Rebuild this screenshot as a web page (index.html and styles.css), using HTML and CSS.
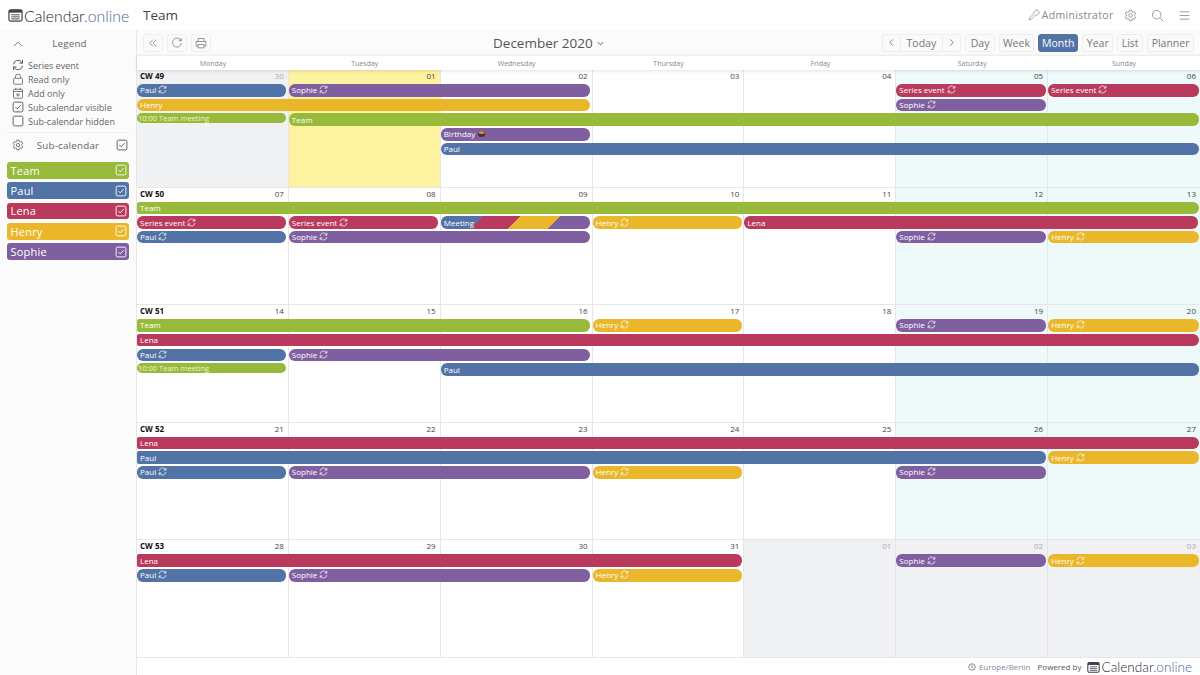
FILE: index.html
```html
<!DOCTYPE html>
<html lang="en">
<head>
    <meta charset="UTF-8">
    <meta name="viewport" content="width=device-width, initial-scale=1.0">
    <title>Team - Calendar.online</title>
    <link rel="stylesheet" href="styles.css">
</head>
<body>
    <svg class="sprite" aria-hidden="true">
        <symbol id="i-sync" viewBox="0 0 16 16">
            <path d="M2 7a6 6 0 0 1 10.5-3.2L14 5.5M14 1.5v4h-4M14 9a6 6 0 0 1-10.5 3.2L2 10.5M2 14.5v-4h4" fill="none" stroke="currentColor" stroke-width="1.3"/>
        </symbol>
        <symbol id="i-check" viewBox="0 0 16 16">
            <rect x="1.5" y="1.5" width="13" height="13" rx="2" fill="none" stroke="currentColor" stroke-width="1.2"/>
            <path d="M4.5 8l2.5 2.5 4.5-5" fill="none" stroke="currentColor" stroke-width="1.2"/>
        </symbol>
        <symbol id="i-gear" viewBox="0 0 16 16">
            <path d="M6.6 1.5h2.8l.4 2 1.3.7 1.9-.7 1.4 2.5-1.5 1.3v1.4l1.5 1.3-1.4 2.5-1.9-.7-1.3.7-.4 2H6.6l-.4-2-1.3-.7-1.9.7L1.6 10l1.5-1.3V7.3L1.6 6l1.4-2.5 1.9.7 1.3-.7z" fill="none" stroke="currentColor"/>
            <circle cx="8" cy="8" r="2.2" fill="none" stroke="currentColor"/>
        </symbol>
        <symbol id="i-cal" viewBox="0 0 16 14">
            <rect x="1" y="1.5" width="14" height="12" rx="2" fill="none" stroke="currentColor" stroke-width="1.3"/>
            <path d="M1 1.5h14v3H1z" fill="currentColor"/>
            <path d="M3.5 6.8h9M3.5 9h9M3.5 11.2h9" stroke="currentColor"/>
        </symbol>
    </svg>

    <header class="topbar">
        <div class="logo">
            <svg class="logo-icon"><use href="#i-cal"/></svg>
            <span>Calendar<em>.online</em></span>
        </div>
        <div class="page-title">Team</div>
        <div class="user-menu">
            <svg class="icon-key" viewBox="0 0 16 16"><path d="M1.5 14.5l1-3 5.5-5.5a3.5 3.5 0 1 1 2 2l-5.5 5.5z" fill="none" stroke="currentColor"/></svg>
            <span class="user-name">Administrator</span>
            <svg class="top-icon"><use href="#i-gear"/></svg>
            <svg class="top-icon" viewBox="0 0 16 16"><circle cx="7" cy="7" r="5.3" fill="none" stroke="currentColor"/><path d="M11 11l4 4" stroke="currentColor"/></svg>
            <svg class="top-icon" viewBox="0 0 16 16"><path d="M2 3.5h12M2 8h12M2 12.5h12" stroke="currentColor"/></svg>
        </div>
    </header>

    <div class="main">
        <aside class="sidebar">
            <div class="side-head">
                <svg class="side-icon" viewBox="0 0 16 16"><path d="M2.5 11L8 5.5l5.5 5.5" fill="none" stroke="currentColor"/></svg>
                <span class="side-title">Legend</span>
            </div>
            <ul class="legend">
                <li><svg><use href="#i-sync"/></svg>Series event</li>
                <li><svg viewBox="0 0 16 16"><rect x="2" y="7" width="12" height="8" rx="1.5" fill="none" stroke="currentColor"/><path d="M4.5 7V5a3.5 3.5 0 0 1 7 0v2" fill="none" stroke="currentColor"/></svg>Read only</li>
                <li><svg viewBox="0 0 16 16"><rect x="2" y="3" width="12" height="12" rx="1" fill="none" stroke="currentColor"/><path d="M2 6h12M5 1v3M11 1v3M8 8v5M5.5 10.5h5" fill="none" stroke="currentColor"/></svg>Add only</li>
                <li><svg><use href="#i-check"/></svg>Sub-calendar visible</li>
                <li><svg viewBox="0 0 16 16"><rect x="1.5" y="1.5" width="13" height="13" rx="2" fill="none" stroke="currentColor" stroke-width="1.2"/></svg>Sub-calendar hidden</li>
            </ul>
            <div class="side-head sub-head">
                <svg class="side-icon"><use href="#i-gear"/></svg>
                <span class="side-title">Sub-calendar</span>
                <svg class="side-check"><use href="#i-check"/></svg>
            </div>
            <div class="sub-item team">Team<svg><use href="#i-check"/></svg></div>
            <div class="sub-item paul">Paul<svg><use href="#i-check"/></svg></div>
            <div class="sub-item lena">Lena<svg><use href="#i-check"/></svg></div>
            <div class="sub-item henry">Henry<svg><use href="#i-check"/></svg></div>
            <div class="sub-item sophie">Sophie<svg><use href="#i-check"/></svg></div>
        </aside>

        <section class="content">
            <div class="toolbar">
                <div class="tool-left">
                    <button class="btn btn-icon"><svg viewBox="0 0 16 16"><path d="M8 3.5L3.5 8 8 12.5M12.5 3.5L8 8l4.5 4.5" fill="none" stroke="currentColor"/></svg></button>
                    <button class="btn btn-icon"><svg viewBox="0 0 16 16"><path d="M13.5 5a6 6 0 1 0 .5 3M13.8 1.5V5h-3.5" fill="none" stroke="currentColor"/></svg></button>
                    <button class="btn btn-icon"><svg viewBox="0 0 16 16"><path d="M4 6V2h8v4M4 12H1.5V6h13v6H12M4 10h8v4.5H4z" fill="none" stroke="currentColor"/></svg></button>
                </div>
                <div class="month-title">December 2020 <svg viewBox="0 0 10 10"><path d="M2 3.5L5 6.5 8 3.5" fill="none" stroke="currentColor"/></svg></div>
                <div class="tool-right">
                    <div class="btn-group">
                        <button class="btn"><svg viewBox="0 0 10 10"><path d="M6.5 1.5L3 5l3.5 3.5" fill="none" stroke="currentColor"/></svg></button>
                        <button class="btn btn-today">Today</button>
                        <button class="btn"><svg viewBox="0 0 10 10"><path d="M3.5 1.5L7 5 3.5 8.5" fill="none" stroke="currentColor"/></svg></button>
                    </div>
                    <button class="btn btn-day">Day</button>
                    <button class="btn btn-tight">Week</button>
                    <button class="btn btn-tight active">Month</button>
                    <button class="btn">Year</button>
                    <button class="btn">List</button>
                    <button class="btn">Planner</button>
                </div>
            </div>

            <div class="weekdays">
                <div>Monday</div><div>Tuesday</div><div>Wednesday</div><div>Thursday</div><div>Friday</div><div>Saturday</div><div>Sunday</div>
            </div>

            <div class="weeks">
                <div class="week">
                    <div class="day col-1 other"><b>CW 49</b><span class="num">30</span></div>
                    <div class="day col-2 today"><span class="num">01</span></div>
                    <div class="day col-3"><span class="num">02</span></div>
                    <div class="day col-4"><span class="num">03</span></div>
                    <div class="day col-5"><span class="num">04</span></div>
                    <div class="day col-6 weekend"><span class="num">05</span></div>
                    <div class="day col-7 weekend"><span class="num">06</span></div>

                    <div class="ev paul row-1 col-1">Paul<svg><use href="#i-sync"/></svg></div>
                    <div class="ev sophie row-1 col-2 span-2">Sophie<svg><use href="#i-sync"/></svg></div>
                    <div class="ev lena row-1 col-6">Series event<svg><use href="#i-sync"/></svg></div>
                    <div class="ev lena row-1 col-7">Series event<svg><use href="#i-sync"/></svg></div>
                    <div class="ev henry row-2 col-1 span-3">Henry</div>
                    <div class="ev sophie row-2 col-6">Sophie<svg><use href="#i-sync"/></svg></div>
                    <div class="ev timed team row-3 col-1">10:00 Team meeting</div>
                    <div class="ev team row-3 col-2 span-6">Team</div>
                    <div class="ev sophie row-4 col-3">Birthday<svg class="cake" viewBox="0 0 12 12"><ellipse cx="6" cy="6.5" rx="5" ry="4" fill="#4a3326"/><ellipse cx="6" cy="4.5" rx="4" ry="2" fill="#c98a5a"/></svg></div>
                    <div class="ev paul row-5 col-3 span-5">Paul</div>
                </div>

                <div class="week">
                    <div class="day col-1"><b>CW 50</b><span class="num">07</span></div>
                    <div class="day col-2"><span class="num">08</span></div>
                    <div class="day col-3"><span class="num">09</span></div>
                    <div class="day col-4"><span class="num">10</span></div>
                    <div class="day col-5"><span class="num">11</span></div>
                    <div class="day col-6 weekend"><span class="num">12</span></div>
                    <div class="day col-7 weekend"><span class="num">13</span></div>

                    <div class="ev team row-1 col-1 span-7 from-prev">Team</div>
                    <div class="ev lena row-2 col-1">Series event<svg><use href="#i-sync"/></svg></div>
                    <div class="ev lena row-2 col-2">Series event<svg><use href="#i-sync"/></svg></div>
                    <div class="ev meeting row-2 col-3">Meeting</div>
                    <div class="ev henry row-2 col-4">Henry<svg><use href="#i-sync"/></svg></div>
                    <div class="ev lena row-2 col-5 span-3">Lena</div>
                    <div class="ev paul row-3 col-1">Paul<svg><use href="#i-sync"/></svg></div>
                    <div class="ev sophie row-3 col-2 span-2">Sophie<svg><use href="#i-sync"/></svg></div>
                    <div class="ev sophie row-3 col-6">Sophie<svg><use href="#i-sync"/></svg></div>
                    <div class="ev henry row-3 col-7">Henry<svg><use href="#i-sync"/></svg></div>
                </div>

                <div class="week">
                    <div class="day col-1"><b>CW 51</b><span class="num">14</span></div>
                    <div class="day col-2"><span class="num">15</span></div>
                    <div class="day col-3"><span class="num">16</span></div>
                    <div class="day col-4"><span class="num">17</span></div>
                    <div class="day col-5"><span class="num">18</span></div>
                    <div class="day col-6 weekend"><span class="num">19</span></div>
                    <div class="day col-7 weekend"><span class="num">20</span></div>

                    <div class="ev team row-1 col-1 span-3 from-prev">Team</div>
                    <div class="ev henry row-1 col-4">Henry<svg><use href="#i-sync"/></svg></div>
                    <div class="ev sophie row-1 col-6">Sophie<svg><use href="#i-sync"/></svg></div>
                    <div class="ev henry row-1 col-7">Henry<svg><use href="#i-sync"/></svg></div>
                    <div class="ev lena row-2 col-1 span-7 from-prev">Lena</div>
                    <div class="ev paul row-3 col-1">Paul<svg><use href="#i-sync"/></svg></div>
                    <div class="ev sophie row-3 col-2 span-2">Sophie<svg><use href="#i-sync"/></svg></div>
                    <div class="ev timed team row-4 col-1">10:00 Team meeting</div>
                    <div class="ev paul row-4 col-3 span-5">Paul</div>
                </div>

                <div class="week">
                    <div class="day col-1"><b>CW 52</b><span class="num">21</span></div>
                    <div class="day col-2"><span class="num">22</span></div>
                    <div class="day col-3"><span class="num">23</span></div>
                    <div class="day col-4"><span class="num">24</span></div>
                    <div class="day col-5"><span class="num">25</span></div>
                    <div class="day col-6 weekend"><span class="num">26</span></div>
                    <div class="day col-7 weekend"><span class="num">27</span></div>

                    <div class="ev lena row-1 col-1 span-7 from-prev">Lena</div>
                    <div class="ev paul row-2 col-1 span-6 from-prev">Paul</div>
                    <div class="ev henry row-2 col-7">Henry<svg><use href="#i-sync"/></svg></div>
                    <div class="ev paul row-3 col-1">Paul<svg><use href="#i-sync"/></svg></div>
                    <div class="ev sophie row-3 col-2 span-2">Sophie<svg><use href="#i-sync"/></svg></div>
                    <div class="ev henry row-3 col-4">Henry<svg><use href="#i-sync"/></svg></div>
                    <div class="ev sophie row-3 col-6">Sophie<svg><use href="#i-sync"/></svg></div>
                </div>

                <div class="week">
                    <div class="day col-1"><b>CW 53</b><span class="num">28</span></div>
                    <div class="day col-2"><span class="num">29</span></div>
                    <div class="day col-3"><span class="num">30</span></div>
                    <div class="day col-4"><span class="num">31</span></div>
                    <div class="day col-5 other"><span class="num">01</span></div>
                    <div class="day col-6 other"><span class="num">02</span></div>
                    <div class="day col-7 other"><span class="num">03</span></div>

                    <div class="ev lena row-1 col-1 span-4 from-prev">Lena</div>
                    <div class="ev sophie row-1 col-6">Sophie<svg><use href="#i-sync"/></svg></div>
                    <div class="ev henry row-1 col-7">Henry<svg><use href="#i-sync"/></svg></div>
                    <div class="ev paul row-2 col-1">Paul<svg><use href="#i-sync"/></svg></div>
                    <div class="ev sophie row-2 col-2 span-2">Sophie<svg><use href="#i-sync"/></svg></div>
                    <div class="ev henry row-2 col-4">Henry<svg><use href="#i-sync"/></svg></div>
                </div>
            </div>

            <footer class="footer">
                <svg class="clock" viewBox="0 0 16 16"><circle cx="8" cy="8" r="6.5" fill="none" stroke="currentColor" stroke-width="1.5"/><path d="M8 4v4.5l3 1.5" fill="none" stroke="currentColor" stroke-width="1.5"/></svg>
                <span class="timezone">Europe/Berlin</span>
                <span class="powered">Powered by</span>
                <div class="logo logo-small">
                    <svg class="logo-icon"><use href="#i-cal"/></svg>
                    <span>Calendar<em>.online</em></span>
                </div>
            </footer>
        </section>
    </div>
</body>
</html>
```

FILE: styles.css
```css
* {
    box-sizing: border-box;
}

html, body {
    height: 100%;
}

body {
    margin: 0;
    display: flex;
    flex-direction: column;
    overflow: hidden;
    font-family: 'Open Sans', 'Liberation Sans', sans-serif;
    color: #666;
    background-color: #fff;
}

.sprite {
    position: absolute;
    width: 0;
    height: 0;
}

/* top bar */
.topbar {
    height: 30px;
    flex: none;
    display: flex;
    align-items: center;
    padding-left: 8px;
    background-color: #fff;
}

.logo {
    display: flex;
    align-items: center;
    width: 135px;
    flex: none;
    font-family: 'Lato', sans-serif;
    font-weight: 300;
    font-size: 15.8px;
    color: #1f252e;
}

.logo em {
    font-style: normal;
    color: #4d688f;
}

.logo-icon {
    width: 15px;
    height: 14px;
    flex: none;
    margin-right: 1px;
    color: #3d4450;
}

.page-title {
    font-size: 13.5px;
    color: #444;
}

.user-menu {
    margin-left: auto;
    display: flex;
    align-items: center;
    padding-right: 9px;
    color: #888;
}

.icon-key {
    width: 12px;
    height: 12px;
    margin-right: 2px;
}

.user-name {
    font-size: 10.5px;
    letter-spacing: 0.3px;
}

.top-icon {
    width: 13px;
    height: 13px;
    margin-left: 14px;
}

.user-name + .top-icon {
    margin-left: 10.5px;
}

.main {
    flex: 1;
    min-height: 0;
    display: flex;
}

/* sidebar */
.sidebar {
    width: 137px;
    flex: none;
    padding: 0 7px;
    border-right: 1px solid #e6e6e6;
    background-color: #fbfbfb;
}

.side-head {
    height: 27px;
    display: flex;
    align-items: center;
    padding-left: 5px;
    font-size: 9.8px;
    letter-spacing: 0.2px;
}

.side-icon {
    width: 12px;
    height: 12px;
    color: #555;
}

.side-title {
    flex: 1;
    text-align: center;
    padding-right: 14px;
}

.sub-head {
    height: 25px;
    margin-bottom: 5px;
    padding-right: 1px;
    border-top: 1px solid #eee;
}

.sub-head .side-title {
    padding-right: 4px;
}

.side-check {
    width: 12px;
    height: 12px;
    color: #555;
}

.legend {
    list-style: none;
    margin: 1px 0 4px;
    padding: 0 0 0 5px;
    font-size: 9px;
    white-space: nowrap;
    overflow: hidden;
}

.legend li {
    height: 14px;
    display: flex;
    align-items: center;
    gap: 4px;
}

.legend svg {
    width: 12px;
    height: 12px;
    color: #555;
}

.sub-item {
    height: 16.8px;
    margin-bottom: 3.5px;
    display: flex;
    align-items: center;
    justify-content: space-between;
    padding: 0 2.5px 0 3.5px;
    border-radius: 3px;
    font-size: 11px;
    letter-spacing: 0.2px;
    color: #fff;
}

.sub-item svg {
    width: 12px;
    height: 12px;
}

.team { background-color: #97ba3b; }
.paul { background-color: #5273a6; }
.lena { background-color: #b93a5c; }
.henry { background-color: #e9b729; }
.sophie { background-color: #7f5fa0; }

/* toolbar */
.content {
    flex: 1;
    min-width: 0;
    display: flex;
    flex-direction: column;
}

.toolbar {
    height: 25px;
    flex: none;
    display: flex;
    align-items: center;
    padding: 0 6px;
    background-color: #fbfbfb;
    position: relative;
}

.tool-left, .tool-right {
    display: flex;
    align-items: center;
    gap: 4px;
}

.tool-right {
    margin-left: auto;
}

.month-title {
    position: absolute;
    left: 356px;
    top: 4px;
    font-size: 13.5px;
    color: #555;
    display: flex;
    align-items: center;
    gap: 3px;
}

.month-title svg {
    width: 9px;
    height: 9px;
}

.btn {
    height: 18px;
    padding: 0 3.5px;
    display: flex;
    align-items: center;
    border: 1px solid #eee;
    border-radius: 3px;
    background-color: #fafafa;
    font-family: inherit;
    font-size: 10.5px;
    color: #777;
}

.btn svg {
    width: 9px;
    height: 9px;
}

.btn-icon {
    width: 20px;
    justify-content: center;
    padding: 0;
}

.btn-icon svg {
    width: 12px;
    height: 12px;
}

.btn-today {
    padding: 0 6px;
}

.btn-day {
    padding: 0 4.5px;
}

.btn-tight {
    padding: 0 3px;
}

.btn.active {
    background-color: #5273a6;
    border-color: #5273a6;
    color: #fff;
}

.btn-group {
    display: flex;
}

.btn-group .btn {
    border-radius: 0;
    border-right: none;
}

.btn-group .btn:first-child {
    padding: 0 4px;
    border-radius: 3px 0 0 3px;
}

.btn-group .btn:last-child {
    padding: 0 4px;
    border-right: 1px solid #eee;
    border-radius: 0 3px 3px 0;
}

/* calendar */
.weekdays {
    height: 15px;
    flex: none;
    display: grid;
    grid-template-columns: repeat(7, 1fr);
    border-top: 1px solid #eee;
    background-color: #fff;
    box-shadow: 0 1px 3px rgba(0, 0, 0, 0.12);
    position: relative;
    z-index: 1;
    font-size: 7px;
    line-height: 15px;
    text-align: center;
    color: #888;
}

.weeks {
    flex: 1;
    min-height: 0;
    display: grid;
    grid-template-rows: repeat(5, 1fr);
}

.week {
    display: grid;
    grid-template-columns: repeat(7, 1fr);
    grid-template-rows: 14px repeat(6, 14.7px) 1fr;
    min-height: 0;
}

.day {
    grid-row: 1 / -1;
    display: flex;
    justify-content: space-between;
    padding: 1px 4px 0 3px;
    border-right: 1px solid #e6e6e6;
    border-bottom: 1px solid #e6e6e6;
    font-size: 8px;
    line-height: 10px;
    color: #444;
}

.day.col-7 {
    border-right: none;
}

.day b {
    color: #111;
}

.num {
    margin-left: auto;
}

.other {
    background-color: #f0f1f3;
}

.other .num {
    color: #aaa;
}

.today {
    background-color: #fdf2a0;
}

.weekend {
    background-color: #eef9f9;
}

.col-1 { grid-column-start: 1; }
.col-2 { grid-column-start: 2; }
.col-3 { grid-column-start: 3; }
.col-4 { grid-column-start: 4; }
.col-5 { grid-column-start: 5; }
.col-6 { grid-column-start: 6; }
.col-7 { grid-column-start: 7; }

.span-2 { grid-column-end: span 2; }
.span-3 { grid-column-end: span 3; }
.span-4 { grid-column-end: span 4; }
.span-5 { grid-column-end: span 5; }
.span-6 { grid-column-end: span 6; }
.span-7 { grid-column-end: span 7; }

.row-1 { grid-row-start: 2; }
.row-2 { grid-row-start: 3; }
.row-3 { grid-row-start: 4; }
.row-4 { grid-row-start: 5; }
.row-5 { grid-row-start: 6; }

.ev {
    height: 12.5px;
    margin-right: 2.5px;
    padding: 0 0 1px 3px;
    display: flex;
    align-items: center;
    gap: 2px;
    border-radius: 6px;
    font-size: 8px;
    white-space: pre;
    color: #fff;
    overflow: hidden;
    position: relative;
}

.ev svg {
    width: 9px;
    height: 9px;
    flex: none;
}

.ev.col-7, .ev.span-5, .ev.span-6, .ev.span-7 {
    margin-right: 1px;
}

.ev.span-6.from-prev {
    margin-right: 2.5px;
}

.from-prev {
    border-radius: 2px 6px 6px 2px;
}

.timed {
    height: 9.5px;
    padding-left: 1px;
    font-size: 7.5px;
    color: #f7f3c8;
}

.meeting {
    background: linear-gradient(135deg, #5273a6 26%, #b93a5c 26%, #b93a5c 49%, #e9b729 49%, #e9b729 74%, #7f5fa0 74%);
}

/* footer */
.footer {
    height: 17px;
    flex: none;
    display: flex;
    align-items: center;
    justify-content: flex-end;
    padding-right: 8px;
    font-size: 8px;
}

.clock {
    width: 8px;
    height: 8px;
    margin-right: 3px;
}

.timezone {
    color: #7a8aa0;
    margin-right: 7px;
}

.powered {
    color: #555;
    margin-right: 6px;
}

.logo-small {
    width: auto;
    font-size: 13.6px;
}

.logo-small .logo-icon {
    width: 13px;
    height: 12px;
}
```
